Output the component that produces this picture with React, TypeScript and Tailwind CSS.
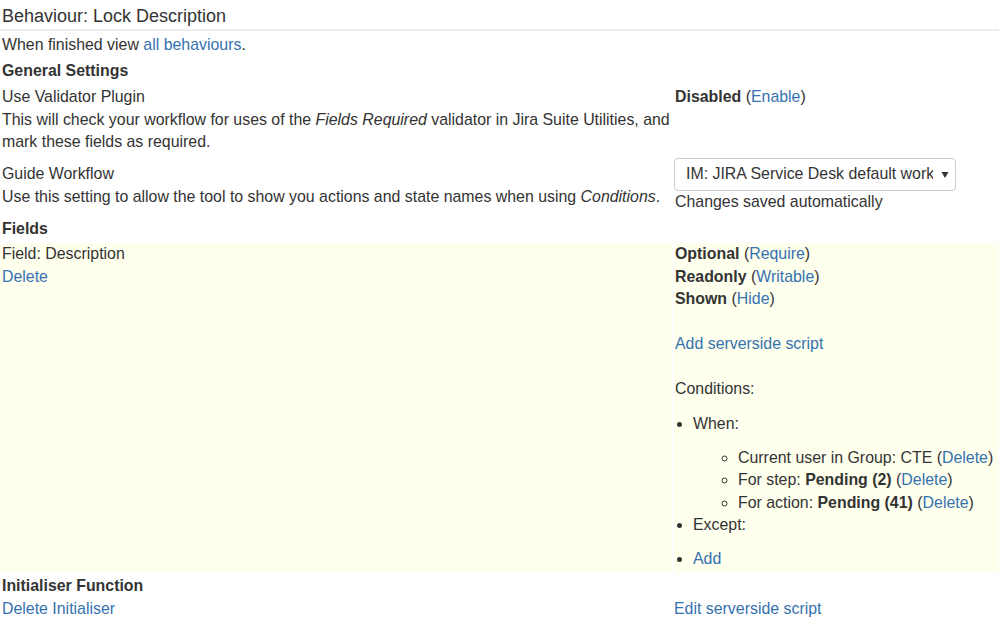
import React from 'react';

const link = 'text-[#3572b0]';

const Paren = ({ children }: { children: React.ReactNode }) => (
  <>
    {' '}(<span className={link}>{children}</span>)
  </>
);

export default function App() {
  return (
    <div
      className="w-[999px] h-[620px] overflow-hidden bg-white text-[#333] text-[15.9px] leading-[22.5px]"
      style={{ fontFamily: '"Liberation Sans", Arial, sans-serif' }}
    >
      {/* Page title */}
      <h2 className="h-[31px] pl-[2px] pt-[4px] text-[18px] leading-[24px] font-normal border-b-2 border-[#eee]">
        Behaviour: Lock Description
      </h2>

      <p className="mt-[3px] pl-[2px]">
        When finished view <span className={link}>all behaviours</span>.
      </p>

      <div className="mt-[3px] pl-[2px] font-bold">General Settings</div>

      {/* Validator plugin */}
      <div className="mt-[4px] grid grid-cols-[672px_1fr] gap-x-[2px]">
        <div className="pl-[2px]">
          <div>Use Validator Plugin</div>
          <div className="whitespace-nowrap">
            This will check your workflow for uses of the <i>Fields Required</i> validator in Jira Suite Utilities, and
          </div>
          <div>mark these fields as required.</div>
        </div>
        <div className="pl-[1px]">
          <b>Disabled</b>
          <Paren>Enable</Paren>
        </div>
      </div>

      {/* Guide workflow */}
      <div className="mt-[4.5px] grid grid-cols-[672px_1fr] gap-x-[2px] items-center">
        <div className="pl-[2px]">
          <div>Guide Workflow</div>
          <div className="whitespace-nowrap">
            Use this setting to allow the tool to show you actions and state names when using <i>Conditions</i>.
          </div>
        </div>
        <div>
          <div className="relative w-[282px] h-[33px] border border-[#ccc] rounded-[4px] bg-white flex items-center">
            <div className="ml-[11px] w-[247px] overflow-hidden whitespace-nowrap">
              IM: JIRA Service Desk default workflow
            </div>
            <svg className="absolute right-[6px] top-[12px]" width="8" height="8" viewBox="0 0 8 8">
              <path d="M0.5 1 L7.5 1 L4 7 Z" fill="#333" />
            </svg>
          </div>
          <div className="pl-[1px]">Changes saved automatically</div>
        </div>
      </div>

      <div className="mt-[4px] pl-[2px] font-bold">Fields</div>

      {/* Field row */}
      <div className="mt-[3px] grid grid-cols-[672px_1fr] gap-x-[2px]">
        <div className="bg-[#ffffee] pl-[2px]">
          <div>Field: Description</div>
          <div className={link}>Delete</div>
        </div>
        <div className="bg-[#ffffee] pl-[1px] pb-[2px]">
          <div>
            <b>Optional</b>
            <Paren>Require</Paren>
          </div>
          <div>
            <b>Readonly</b>
            <Paren>Writable</Paren>
          </div>
          <div>
            <b>Shown</b>
            <Paren>Hide</Paren>
          </div>
          <div className="h-[22.5px]" />
          <div className={link}>Add serverside script</div>
          <div className="h-[22.5px]" />
          <div>Conditions:</div>
          <ul className="mt-[12px] pl-[18px] list-disc">
            <li>
              When:
              <ul className="mt-[11.5px] pl-[45px] list-[circle]">
                <li className="whitespace-nowrap">
                  Current user in Group: CTE
                  <Paren>Delete</Paren>
                </li>
                <li>
                  For step: <b>Pending (2)</b>
                  <Paren>Delete</Paren>
                </li>
                <li>
                  For action: <b>Pending (41)</b>
                  <Paren>Delete</Paren>
                </li>
              </ul>
            </li>
            <li>Except:</li>
          </ul>
          <ul className="mt-[11px] pl-[18px] list-disc">
            <li>
              <span className={link}>Add</span>
            </li>
          </ul>
        </div>
      </div>

      <div className="mt-[3px] pl-[2px] font-bold">Initialiser Function</div>
      <div className="grid grid-cols-[672px_1fr] gap-x-[2px]">
        <div className={`pl-[2px] ${link}`}>Delete Initialiser</div>
        <div className={link}>Edit serverside script</div>
      </div>
    </div>
  );
}
